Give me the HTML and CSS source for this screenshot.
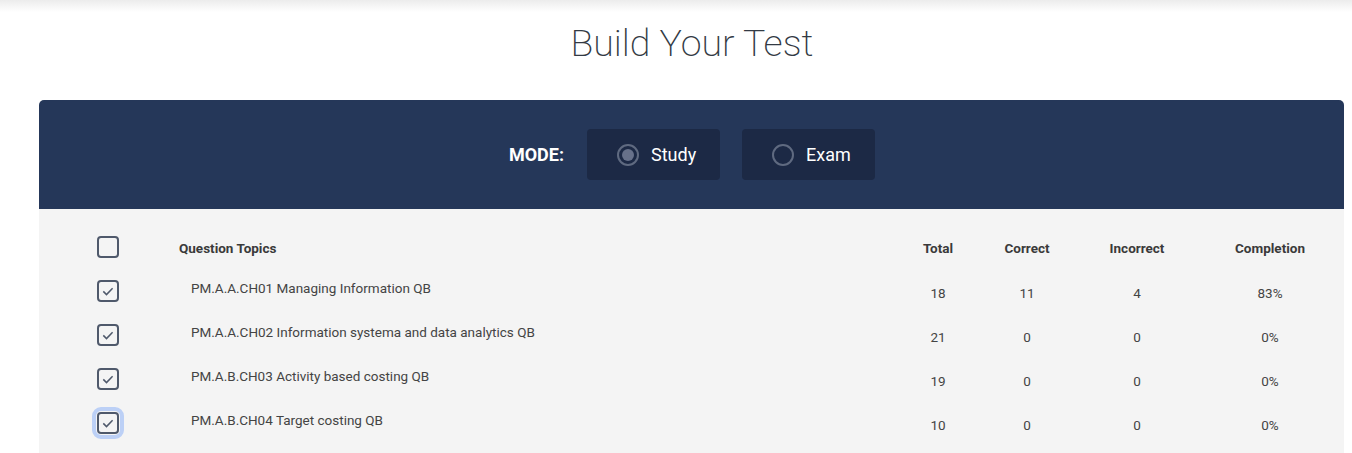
FILE: index.html
```html
<!DOCTYPE html>
<html>
<head>
<meta charset="utf-8">
<link rel="stylesheet" href="styles.css">
</head>
<body>
<div class="topshade"></div>
<h1 class="title">Build Your Test</h1>
<div class="card">
  <div class="card-head">
    <span class="mode-label">MODE:</span>
    <div class="mode-btn"><span class="radio checked"></span><span>Study</span></div>
    <div class="mode-btn"><span class="radio"></span><span>Exam</span></div>
  </div>
  <div class="card-body">
    <div class="row head">
      <div class="cb-cell"><span class="cb"></span></div>
      <div class="topic">Question Topics</div>
      <div class="num">Total</div>
      <div class="num">Correct</div>
      <div class="num">Incorrect</div>
      <div class="num">Completion</div>
    </div>
    <div class="row">
      <div class="cb-cell"><span class="cb on"><svg viewBox="0 0 22 22"><path d="M6.3 11.4 L9.5 14.6 L15.6 8.2"/></svg></span></div>
      <div class="topic">PM.A.A.CH01 Managing Information QB</div>
      <div class="num">18</div><div class="num">11</div><div class="num">4</div><div class="num">83%</div>
    </div>
    <div class="row">
      <div class="cb-cell"><span class="cb on"><svg viewBox="0 0 22 22"><path d="M6.3 11.4 L9.5 14.6 L15.6 8.2"/></svg></span></div>
      <div class="topic">PM.A.A.CH02 Information systema and data analytics QB</div>
      <div class="num">21</div><div class="num">0</div><div class="num">0</div><div class="num">0%</div>
    </div>
    <div class="row">
      <div class="cb-cell"><span class="cb on"><svg viewBox="0 0 22 22"><path d="M6.3 11.4 L9.5 14.6 L15.6 8.2"/></svg></span></div>
      <div class="topic">PM.A.B.CH03 Activity based costing QB</div>
      <div class="num">19</div><div class="num">0</div><div class="num">0</div><div class="num">0%</div>
    </div>
    <div class="row">
      <div class="cb-cell"><span class="cb on focus"><svg viewBox="0 0 22 22"><path d="M6.3 11.4 L9.5 14.6 L15.6 8.2"/></svg></span></div>
      <div class="topic">PM.A.B.CH04 Target costing QB</div>
      <div class="num">10</div><div class="num">0</div><div class="num">0</div><div class="num">0%</div>
    </div>
  </div>
</div>
</body>
</html>
```

FILE: styles.css
```css
* { box-sizing: border-box; }
html, body { margin: 0; padding: 0; background: #ffffff; }
body {
  font-family: Roboto, "Liberation Sans", sans-serif;
  height: 453px;
  overflow: hidden;
}
.topshade {
  height: 12px;
  background: linear-gradient(to bottom, #ececec, rgba(255,255,255,0));
  margin-bottom: -12px;
}
.title {
  margin: 0;
  padding-top: 16px;
  padding-left: 32px;
  height: 100px;
  text-align: center;
  font-weight: 200;
  font-size: 37.5px;
  line-height: 54px;
  color: #333a44;
}
.card {
  margin-left: 39px;
  width: 1305px;
}
.card-head {
  height: 109px;
  background: #253759;
  border-radius: 5px 5px 0 0;
  display: flex;
  align-items: center;
  justify-content: center;
  gap: 22px;
  padding-left: 1px;
}
.mode-label {
  color: #ffffff;
  font-weight: 700;
  font-size: 18px;
  margin-right: 1px;
}
.mode-btn {
  width: 133px;
  height: 51px;
  background: #1c2945;
  border-radius: 4px;
  display: flex;
  align-items: center;
  gap: 12px;
  padding-left: 30px;
  color: #ffffff;
  font-size: 18px;
}
.radio {
  width: 22px;
  height: 22px;
  border-radius: 50%;
  border: 2px solid #5f6a80;
  display: flex;
  align-items: center;
  justify-content: center;
}
.radio.checked::after {
  content: "";
  width: 12px;
  height: 12px;
  border-radius: 50%;
  background: #67718a;
}
.card-body {
  background: #f4f4f4;
  padding-top: 16px;
  height: 244px;
}
.row {
  display: grid;
  grid-template-columns: 82px 719px 80px 98px 122px 144px;
  padding-left: 58px;
  height: 44px;
  align-items: center;
  color: #444444;
  font-size: 13.5px;
}
.row.head {
  font-weight: 700;
  color: #3a3a3a;
}
.row .topic {
  padding-left: 12px;
  padding-bottom: 6px;
}
.row .num { padding-top: 4px; }
.row.head .topic {
  padding-left: 0;
  padding-bottom: 0;
  padding-top: 2px;
}
.row.head .num { padding-top: 2px; }
.num { text-align: center; }
.cb-cell { display: flex; }
.cb {
  width: 22px;
  height: 22px;
  border: 2px solid #4f596b;
  border-radius: 4px;
  display: block;
  position: relative;
}
.cb svg {
  position: absolute;
  left: -2px;
  top: -2px;
  width: 22px;
  height: 22px;
}
.cb svg path {
  fill: none;
  stroke: #4f596b;
  stroke-width: 1.5;
}
.cb.focus {
  outline: 4px solid #bcd0f6;
  outline-offset: 1px;
}
```
